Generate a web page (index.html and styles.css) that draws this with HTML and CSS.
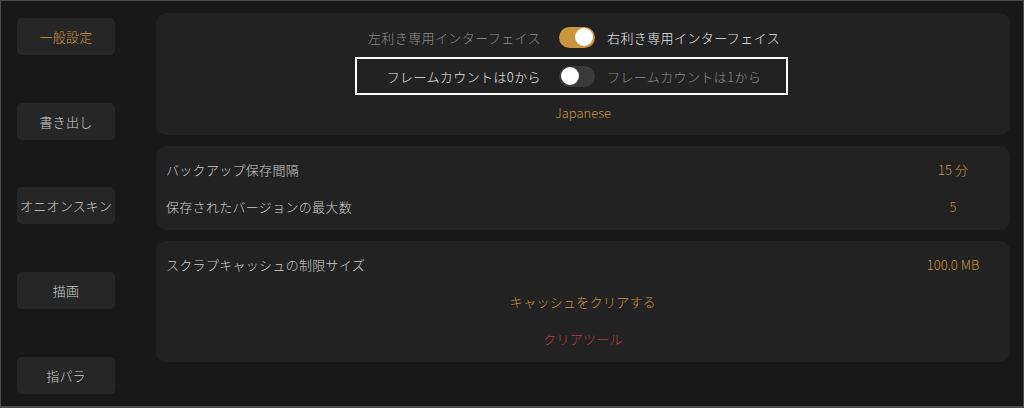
FILE: index.html
```html
<!DOCTYPE html>
<html lang="ja">
<head>
<meta charset="utf-8">
<link rel="stylesheet" href="styles.css">
</head>
<body>
<div class="screen">
  <nav class="sidebar">
    <div class="nav-btn active">一般設定</div>
    <div class="nav-btn">書き出し</div>
    <div class="nav-btn">オニオンスキン</div>
    <div class="nav-btn">描画</div>
    <div class="nav-btn">指パラ</div>
  </nav>
  <main class="content">
    <section class="panel panel-hand">
      <div class="hand-rows">
        <div class="switch-row">
          <span class="lbl lbl-left dim">左利き専用インターフェイス</span>
          <span class="toggle on"><span class="knob"></span></span>
          <span class="lbl lbl-right bright">右利き専用インターフェイス</span>
        </div>
        <div class="switch-row highlight">
          <span class="lbl lbl-left bright">フレームカウントは0から</span>
          <span class="toggle"><span class="knob"></span></span>
          <span class="lbl lbl-right dim">フレームカウントは1から</span>
        </div>
      </div>
      <div class="lang">Japanese</div>
    </section>
    <section class="panel list">
      <div class="row"><span class="label">バックアップ保存間隔</span><span class="value">15 分</span></div>
      <div class="row"><span class="label">保存されたバージョンの最大数</span><span class="value">5</span></div>
    </section>
    <section class="panel list">
      <div class="row"><span class="label">スクラプキャッシュの制限サイズ</span><span class="value">100.0 MB</span></div>
      <div class="row center"><span class="action">キャッシュをクリアする</span></div>
      <div class="row center"><span class="action danger">クリアツール</span></div>
    </section>
  </main>
</div>
</body>
</html>
```
FILE: styles.css
```css
* { box-sizing: border-box; }
html, body { margin: 0; padding: 0; background: #181818; }
body {
  font-family: "Noto Sans CJK JP", "Noto Sans", sans-serif;
  font-weight: 300;
  color: #c8c8c8;
}
.screen {
  width: 1024px;
  height: 408px;
  border: 1px solid #4c4c4c;
  border-bottom-width: 2px;
  background: #181818;
  display: flex;
  overflow: hidden;
}
.sidebar {
  width: 155px;
  padding: 17px 0 0 16px;
  display: flex;
  flex-direction: column;
  gap: 47.7px;
}
.nav-btn {
  width: 98px;
  height: 37px;
  border-radius: 5px;
  background: #262626;
  color: #cdcdcd;
  font-size: 13px;
  letter-spacing: 0.2px;
  display: flex;
  align-items: center;
  justify-content: center;
  white-space: nowrap;
}
.nav-btn.active { color: #d19a44; }
.content {
  flex: 1;
  padding: 12px 13px 0 0;
  display: flex;
  flex-direction: column;
  gap: 11px;
}
.panel {
  background: #222222;
  border-radius: 10px;
}
.panel-hand {
  padding: 5px 0 6px;
}
.hand-rows {
  display: flex;
  flex-direction: column;
  align-items: center;
  gap: 1px;
  padding-right: 23px;
}
.switch-row {
  display: flex;
  align-items: center;
  height: 38px;
  border: 2px solid transparent;
  padding: 0 5px 0 10px;
  font-size: 13px;
  letter-spacing: 0.4px;
}
.switch-row.highlight { border-color: #ffffff; }
.lbl { width: 174px; white-space: nowrap; }
.lbl-left { text-align: right; }
.lbl-right { text-align: left; }
.dim { color: #8e8e8e; }
.bright { color: #e8e8e8; }
.toggle {
  width: 36px;
  height: 21px;
  border-radius: 11px;
  background: #3a3a3a;
  margin: 0 12px 0 18px;
  display: flex;
  align-items: center;
  padding: 0 2px;
  flex: none;
}
.toggle.on { background: #c99540; justify-content: flex-end; }
.knob {
  width: 18px;
  height: 18px;
  border-radius: 50%;
  background: #ffffff;
}
.lang {
  height: 34px;
  display: flex;
  align-items: center;
  justify-content: center;
  color: #cc9440;
  font-size: 13px;
}
.list { padding: 5px 0; }
.row {
  height: 37px;
  display: flex;
  align-items: center;
  justify-content: space-between;
  padding: 0 17px 0 10px;
  font-size: 13px;
  letter-spacing: 0.3px;
}
.row.center { justify-content: center; padding: 0; }
.label { color: #cdcdcd; }
.value {
  width: 80px;
  text-align: center;
  color: #cc9440;
  letter-spacing: 0;
}
.action { color: #cc9440; }
.action.danger { color: #b83c4c; }
```
